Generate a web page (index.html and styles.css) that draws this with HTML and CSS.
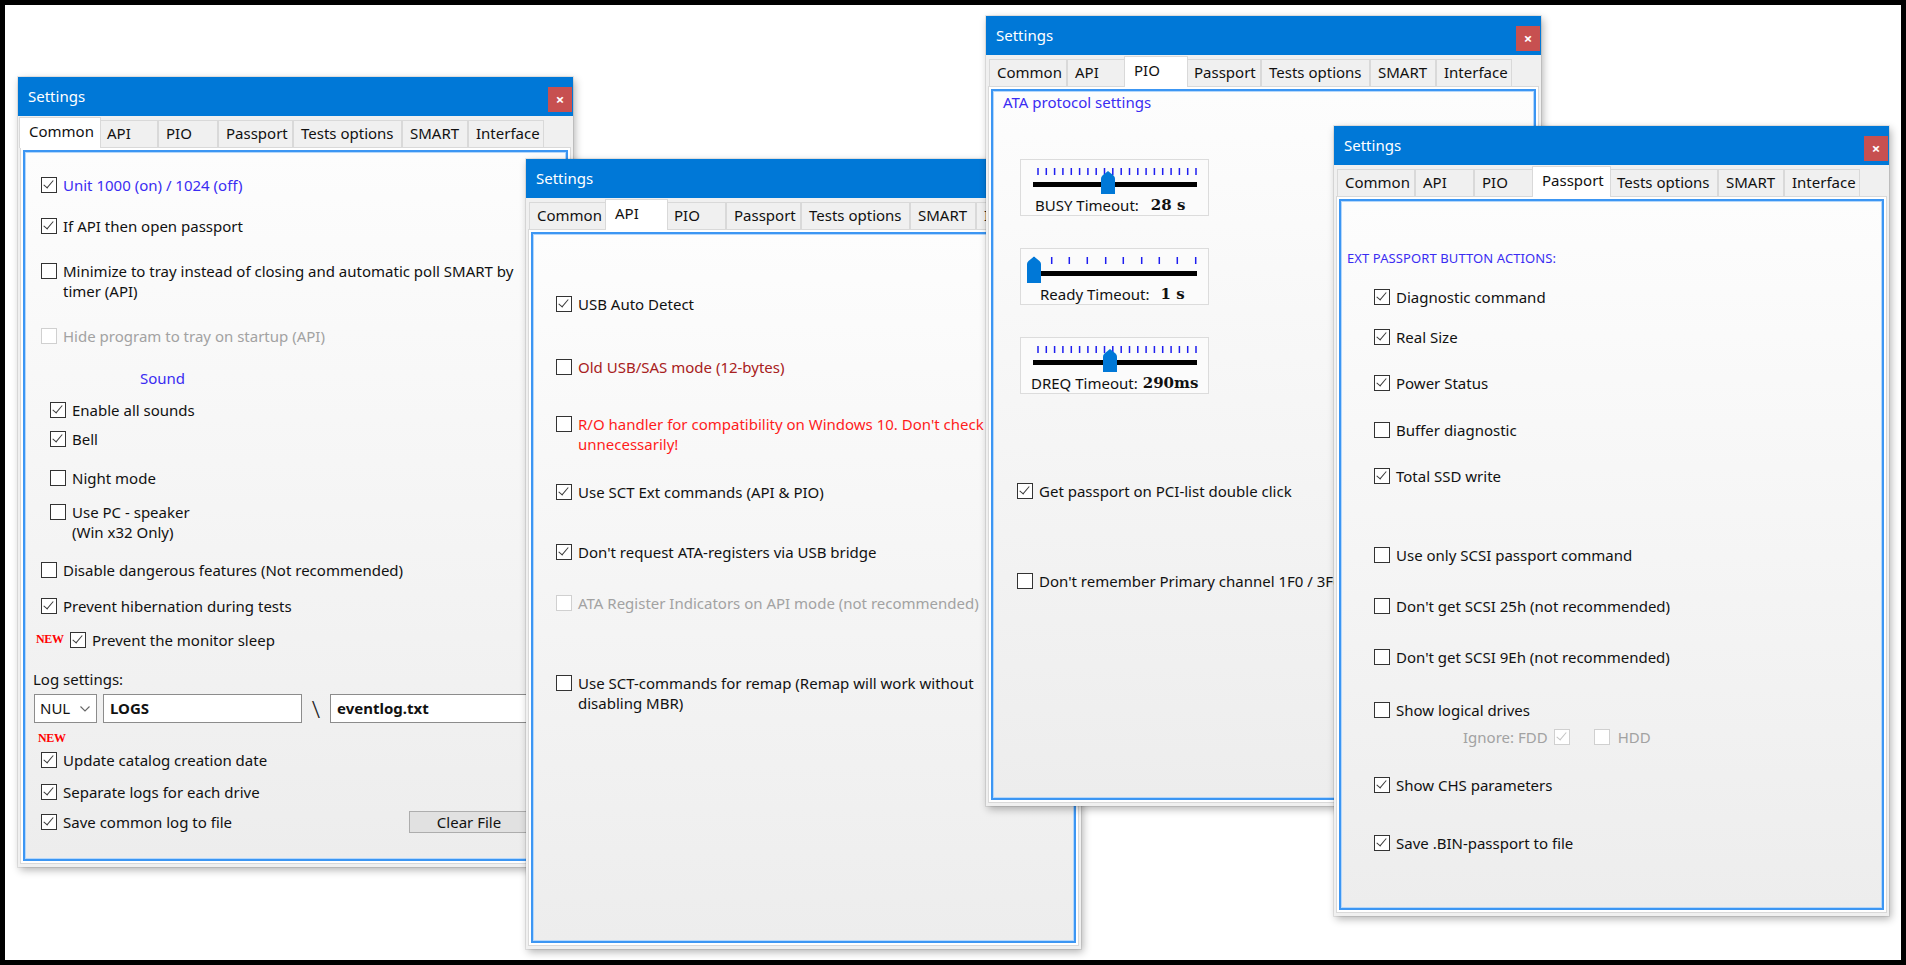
FILE: index.html
```html
<!DOCTYPE html>
<html lang="en">
<head>
  <meta charset="UTF-8">
  <title>Settings</title>
  <link rel="stylesheet" href="styles.css">
</head>
<body>
<div class="desktop">

  <!-- Common tab -->
  <section class="window win-common">
    <div class="titlebar"><span class="title">Settings</span><span class="close">×</span></div>
    <div class="tabs">
      <span class="tab t-common active">Common</span>
      <span class="tab t-api">API</span>
      <span class="tab t-pio">PIO</span>
      <span class="tab t-passport">Passport</span>
      <span class="tab t-tests">Tests options</span>
      <span class="tab t-smart">SMART</span>
      <span class="tab t-iface">Interface</span>
    </div>
    <div class="page">
      <div class="panel panel-common">
        <div class="opt ind blue"><span class="box on"></span>Unit 1000 (on) / 1024 (off)</div>
        <div class="opt ind mt-21"><span class="box on"></span>If API then open passport</div>
        <div class="opt ind mt-25"><span class="box"></span><span>Minimize to tray instead of closing and automatic poll SMART by<br>timer (API)</span></div>
        <div class="opt ind off mt-25"><span class="box"></span>Hide program to tray on startup (API)</div>
        <div class="caption blue sound mt-22">Sound</div>
        <div class="opt sub mt-12"><span class="box on"></span>Enable all sounds</div>
        <div class="opt sub mt-9"><span class="box on"></span>Bell</div>
        <div class="opt sub mt-19"><span class="box"></span>Night mode</div>
        <div class="opt sub mt-14"><span class="box"></span><span>Use PC - speaker<br>(Win x32 Only)</span></div>
        <div class="opt ind mt-18"><span class="box"></span>Disable dangerous features (Not recommended)</div>
        <div class="opt ind mt-16"><span class="box on"></span>Prevent hibernation during tests</div>
        <div class="opt new-row mt-14"><span class="new">NEW</span><span class="box on"></span>Prevent the monitor sleep</div>
        <div class="caption mt-19">Log settings:</div>
        <div class="log-row mt-5">
          <div class="select">NUL<svg width="10" height="6" viewBox="0 0 10 6"><path d="M0.5 0.5 L5 5 L9.5 0.5" fill="none" stroke="#666" stroke-width="1.1"/></svg></div>
          <div class="field f-dir">LOGS</div>
          <span class="slash">\</span>
          <div class="field f-file">eventlog.txt</div>
        </div>
        <div class="new new-2 mt-9">NEW</div>
        <div class="opt ind mt-6"><span class="box on"></span>Update catalog creation date</div>
        <div class="opt ind mt-12"><span class="box on"></span>Separate logs for each drive</div>
        <div class="opt ind save-row mt-9"><span class="box on"></span>Save common log to file<span class="btn">Clear File</span></div>
      </div>
    </div>
  </section>

  <!-- API tab -->
  <section class="window win-api">
    <div class="titlebar"><span class="title">Settings</span><span class="close">×</span></div>
    <div class="tabs">
      <span class="tab t-common">Common</span>
      <span class="tab t-api active">API</span>
      <span class="tab t-pio">PIO</span>
      <span class="tab t-passport">Passport</span>
      <span class="tab t-tests">Tests options</span>
      <span class="tab t-smart">SMART</span>
      <span class="tab t-iface">Interface</span>
    </div>
    <div class="page">
      <div class="panel panel-api">
        <div class="opt"><span class="box on"></span>USB Auto Detect</div>
        <div class="opt dark-red mt-43"><span class="box"></span>Old USB/SAS mode (12-bytes)</div>
        <div class="opt red mt-37"><span class="box"></span><span>R/O handler for compatibility on Windows 10. Don't check<br>unnecessarily!</span></div>
        <div class="opt mt-28"><span class="box on"></span>Use SCT Ext commands (API &amp; PIO)</div>
        <div class="opt mt-40"><span class="box on"></span>Don't request ATA-registers via USB bridge</div>
        <div class="opt off mt-31"><span class="box"></span>ATA Register Indicators on API mode (not recommended)</div>
        <div class="opt mt-60"><span class="box"></span><span>Use SCT-commands for remap (Remap will work without<br>disabling MBR)</span></div>
      </div>
    </div>
  </section>

  <!-- PIO tab -->
  <section class="window win-pio">
    <div class="titlebar"><span class="title">Settings</span><span class="close">×</span></div>
    <div class="tabs">
      <span class="tab t-common">Common</span>
      <span class="tab t-api">API</span>
      <span class="tab t-pio active">PIO</span>
      <span class="tab t-passport">Passport</span>
      <span class="tab t-tests">Tests options</span>
      <span class="tab t-smart">SMART</span>
      <span class="tab t-iface">Interface</span>
    </div>
    <div class="page">
      <div class="panel panel-pio">
        <div class="caption blue ata">ATA protocol settings</div>

        <div class="slider-box mt-47">
          <svg width="187" height="36" viewBox="0 0 187 36">
            <path class="ticks" d="M17 8v7M25.3 8v7M33.6 8v7M41.9 8v7M50.3 8v7M58.6 8v7M66.9 8v7M75.2 8v7M83.5 8v7M91.8 8v7M100.2 8v7M108.5 8v7M116.8 8v7M125.1 8v7M133.4 8v7M141.7 8v7M150.1 8v7M158.4 8v7M166.7 8v7M175 8v7"/>
            <path class="track" d="M12 24.5H176"/>
            <path class="thumb" d="M80 34V18.5Q80 17 81.5 15.5L87 11L92.5 15.5Q94 17 94 18.5V34Z"/>
          </svg>
          <div class="slider-label sl-busy">BUSY Timeout:<b class="val">28 s</b></div>
        </div>

        <div class="slider-box mt-32">
          <svg width="187" height="36" viewBox="0 0 187 36">
            <path class="ticks" d="M13 8v7M30.7 8v7M48.3 8v7M66.3 8v7M84.7 8v7M102.3 8v7M120.7 8v7M138.3 8v7M156.3 8v7M174.7 8v7"/>
            <path class="track" d="M12 24.5H176"/>
            <path class="thumb" d="M6 34V15Q6 13.5 7.5 12L13 7.5L18.5 12Q20 13.5 20 15V34Z"/>
          </svg>
          <div class="slider-label sl-ready">Ready Timeout:<b class="val">1 s</b></div>
        </div>

        <div class="slider-box mt-32">
          <svg width="187" height="36" viewBox="0 0 187 36">
            <path class="ticks" d="M17 8v7M25.3 8v7M33.6 8v7M41.9 8v7M50.3 8v7M58.6 8v7M66.9 8v7M75.2 8v7M83.5 8v7M91.8 8v7M100.2 8v7M108.5 8v7M116.8 8v7M125.1 8v7M133.4 8v7M141.7 8v7M150.1 8v7M158.4 8v7M166.7 8v7M175 8v7"/>
            <path class="track" d="M12 24.5H176"/>
            <path class="thumb" d="M82 34V18.5Q82 17 83.5 15.5L89 11L94.5 15.5Q96 17 96 18.5V34Z"/>
          </svg>
          <div class="slider-label sl-dreq">DREQ Timeout:<b class="val">290ms</b></div>
        </div>

        <div class="opt pio-opt mt-87"><span class="box on"></span>Get passport on PCI-list double click</div>
        <div class="opt pio-opt mt-70"><span class="box"></span>Don't remember Primary channel 1F0 / 3F6</div>
      </div>
    </div>
  </section>

  <!-- Passport tab -->
  <section class="window win-passport">
    <div class="titlebar"><span class="title">Settings</span><span class="close">×</span></div>
    <div class="tabs">
      <span class="tab t-common">Common</span>
      <span class="tab t-api">API</span>
      <span class="tab t-pio">PIO</span>
      <span class="tab t-passport active">Passport</span>
      <span class="tab t-tests">Tests options</span>
      <span class="tab t-smart">SMART</span>
      <span class="tab t-iface">Interface</span>
    </div>
    <div class="page">
      <div class="panel panel-passport">
        <div class="small-caps blue">EXT PASSPORT BUTTON ACTIONS:</div>
        <div class="opt pp mt-21"><span class="box on"></span>Diagnostic command</div>
        <div class="opt pp mt-20"><span class="box on"></span>Real Size</div>
        <div class="opt pp mt-26"><span class="box on"></span>Power Status</div>
        <div class="opt pp mt-27"><span class="box"></span>Buffer diagnostic</div>
        <div class="opt pp mt-26"><span class="box on"></span>Total SSD write</div>
        <div class="opt pp mt-59"><span class="box"></span>Use only SCSI passport command</div>
        <div class="opt pp mt-31"><span class="box"></span>Don't get SCSI 25h (not recommended)</div>
        <div class="opt pp mt-31"><span class="box"></span>Don't get SCSI 9Eh (not recommended)</div>
        <div class="opt pp mt-33"><span class="box"></span>Show logical drives</div>
        <div class="opt off ignore-row mt-7">Ignore: FDD<span class="box on"></span><span class="box hdd"></span>HDD</div>
        <div class="opt pp mt-28"><span class="box on"></span>Show CHS parameters</div>
        <div class="opt pp mt-38"><span class="box on"></span>Save .BIN-passport to file</div>
      </div>
    </div>
  </section>

</div>
</body>
</html>
```

FILE: styles.css
```css
body {
  margin: 0;
  background-color: #000;
  font-family: "Noto Sans", "Open Sans", sans-serif;
  font-size: 15px;
  color: #111;
}

.desktop {
  position: relative;
  width: 1906px;
  height: 965px;
  box-sizing: border-box;
  border: 5px solid #000;
  background-color: #fff;
  overflow: hidden;
}

/* windows sit on the desktop, later ones on top */
.window {
  position: absolute;
  isolation: isolate;
  width: 555px;
  height: 790px;
  display: flex;
  flex-direction: column;
  background-color: #f0f0f0;
  box-shadow: 0 0 0 1px rgba(0, 0, 0, 0.08), 2px 3px 8px rgba(0, 0, 0, 0.3);
}

.win-common { left: 13px; top: 72px; z-index: 1; }
.win-api { left: 521px; top: 154px; z-index: 2; }
.win-pio { left: 981px; top: 11px; z-index: 3; }
.win-passport { left: 1329px; top: 121px; z-index: 4; }

.titlebar {
  height: 39px;
  display: flex;
  align-items: flex-start;
  background-color: #0078d7;
  color: #fff;
}

.title {
  flex: 1;
  padding-left: 10px;
  line-height: 39px;
}

.close {
  width: 24px;
  height: 25px;
  margin: 10px 1px 0 0;
  background-color: #c75050;
  color: #fff;
  font-size: 15px;
  font-weight: bold;
  line-height: 24px;
  text-align: center;
}

/* tab strip */
.tabs {
  position: relative;
  z-index: 1;
  height: 31px;
  display: flex;
  align-items: flex-end;
  padding-left: 3px;
}

.tab {
  box-sizing: border-box;
  width: var(--w);
  height: 27px;
  padding-left: 7px;
  border: 1px solid #d9d9d9;
  border-bottom: 0;
  background-color: #f0f0f0;
  line-height: 25px;
  white-space: nowrap;
}

.tab.active {
  width: calc(var(--w) + 4px);
  height: 31px;
  margin: 0 -2px -1px;
  padding-left: 9px;
  background-color: #fff;
  line-height: 27px;
  position: relative;
}

.t-common { --w: 78px; }
.t-api { --w: 59px; }
.t-pio { --w: 60px; }
.t-passport { --w: 75px; }
.t-tests { --w: 109px; }
.t-smart { --w: 66px; }
.t-iface { --w: 76px; }

.page {
  flex: 1;
  display: flex;
  margin: 0 2px 3px;
  padding: 2px;
  border: 1px solid #d9d9d9;
  background-color: #fff;
}

.panel {
  flex: 1;
  overflow: hidden;
  border: 2px solid #3c96f3;
  box-shadow: inset 0 0 0 1px #b4d7fb;
  background: linear-gradient(#fdfdfd, #ededed);
}

/* checkbox rows */
.opt {
  display: flex;
  align-items: flex-start;
  line-height: 20px;
  white-space: nowrap;
}

.box {
  position: relative;
  flex: none;
  box-sizing: border-box;
  width: 16px;
  height: 16px;
  margin: 2px 6px 0 0;
  border: 1px solid #333;
  background-color: #fff;
}

.box.on::after {
  content: "";
  position: absolute;
  left: 4px;
  top: 0;
  width: 4px;
  height: 9px;
  border: solid #3a3a3a;
  border-width: 0 1.5px 1.5px 0;
  transform: rotate(40deg);
}

.off { color: #a2a2a2; }
.off .box { border-color: #d0d0d0; }
.off .box.on::after { border-color: #c4c4c4; }

.blue { color: #3a2cf2; }
.red { color: #ff1c1c; }
.dark-red { color: #a82020; }

.caption {
  line-height: 20px;
}

/* Common tab */
.panel-common { padding: 23px 0 0 8px; }
.panel-common .ind { margin-left: 8px; }
.panel-common .sub { margin-left: 17px; }
.sound { margin-left: 107px; }

.new {
  color: #f00;
  font-family: "Liberation Serif", serif;
  font-size: 12px;
  font-weight: bold;
  letter-spacing: -0.3px;
  line-height: 14px;
}

.new-row .new {
  width: 26px;
  margin: 2px 8px 0 3px;
}

.new-2 {
  margin-left: 5px;
  line-height: 12px;
}

.log-row {
  display: flex;
  align-items: center;
  height: 29px;
  margin-left: 1px;
}

.select, .field {
  box-sizing: border-box;
  height: 29px;
  border: 1px solid #8c8c8c;
  background-color: #fff;
}

.select {
  width: 63px;
  display: flex;
  align-items: center;
  justify-content: space-between;
  padding: 0 6px 0 5px;
  line-height: 27px;
}

.field {
  padding-left: 6px;
  font-weight: bold;
  line-height: 27px;
}

.f-dir { width: 199px; margin-left: 6px; }
.f-file { width: 200px; }

.slash {
  width: 28px;
  text-align: center;
  font-size: 24px;
  font-weight: 300;
  line-height: 29px;
  color: #222;
}

.save-row { align-items: center; }
.save-row .box { margin-top: 0; }

.btn {
  box-sizing: border-box;
  width: 120px;
  height: 22px;
  margin: 0 37px 0 auto;
  border: 1px solid #adadad;
  background-color: #e1e1e1;
  line-height: 20px;
  text-align: center;
}

/* API tab */
.panel-api { padding: 60px 0 0 23px; }

/* PIO tab */
.panel-pio { padding-top: 1px; }
.ata { margin-left: 10px; }
.pio-opt { margin-left: 24px; }

.slider-box {
  box-sizing: border-box;
  width: 189px;
  height: 57px;
  margin-left: 27px;
  border: 1px solid #dcdcdc;
  background-color: #fbfbfb;
}

.slider-box svg { display: block; }
.ticks { stroke: #1f1ff0; stroke-width: 1.5; }
.track { stroke: #000; stroke-width: 5; }
.thumb { fill: #0078d7; }

.slider-label {
  display: flex;
  line-height: 18px;
  white-space: nowrap;
}

.val {
  font-family: "DejaVu Serif", serif;
  font-size: 15px;
}

.sl-busy { padding-left: 14px; }
.sl-busy .val { margin-left: 12px; }
.sl-ready { padding-left: 19px; }
.sl-ready .val { margin-left: 11px; }
.sl-dreq { padding-left: 10px; }
.sl-dreq .val { margin-left: 5px; }

/* Passport tab */
.panel-passport { padding: 49px 0 0 6px; }

.small-caps {
  font-size: 13px;
  line-height: 16px;
  letter-spacing: 0.1px;
}

.pp { margin-left: 27px; }

.ignore-row { margin-left: 116px; }
.ignore-row .box { margin-left: 6px; }
.ignore-row .hdd { margin-left: 18px; margin-right: 8px; }

/* spacing */
.mt-5 { margin-top: 5px; }
.mt-6 { margin-top: 6px; }
.mt-7 { margin-top: 7px; }
.mt-9 { margin-top: 9px; }
.mt-12 { margin-top: 12px; }
.mt-14 { margin-top: 14px; }
.mt-16 { margin-top: 16px; }
.mt-18 { margin-top: 18px; }
.mt-19 { margin-top: 19px; }
.mt-20 { margin-top: 20px; }
.mt-21 { margin-top: 21px; }
.mt-22 { margin-top: 22px; }
.mt-25 { margin-top: 25px; }
.mt-26 { margin-top: 26px; }
.mt-27 { margin-top: 27px; }
.mt-28 { margin-top: 28px; }
.mt-31 { margin-top: 31px; }
.mt-32 { margin-top: 32px; }
.mt-33 { margin-top: 33px; }
.mt-37 { margin-top: 37px; }
.mt-38 { margin-top: 38px; }
.mt-40 { margin-top: 40px; }
.mt-43 { margin-top: 43px; }
.mt-47 { margin-top: 47px; }
.mt-59 { margin-top: 59px; }
.mt-60 { margin-top: 60px; }
.mt-70 { margin-top: 70px; }
.mt-87 { margin-top: 87px; }
```
